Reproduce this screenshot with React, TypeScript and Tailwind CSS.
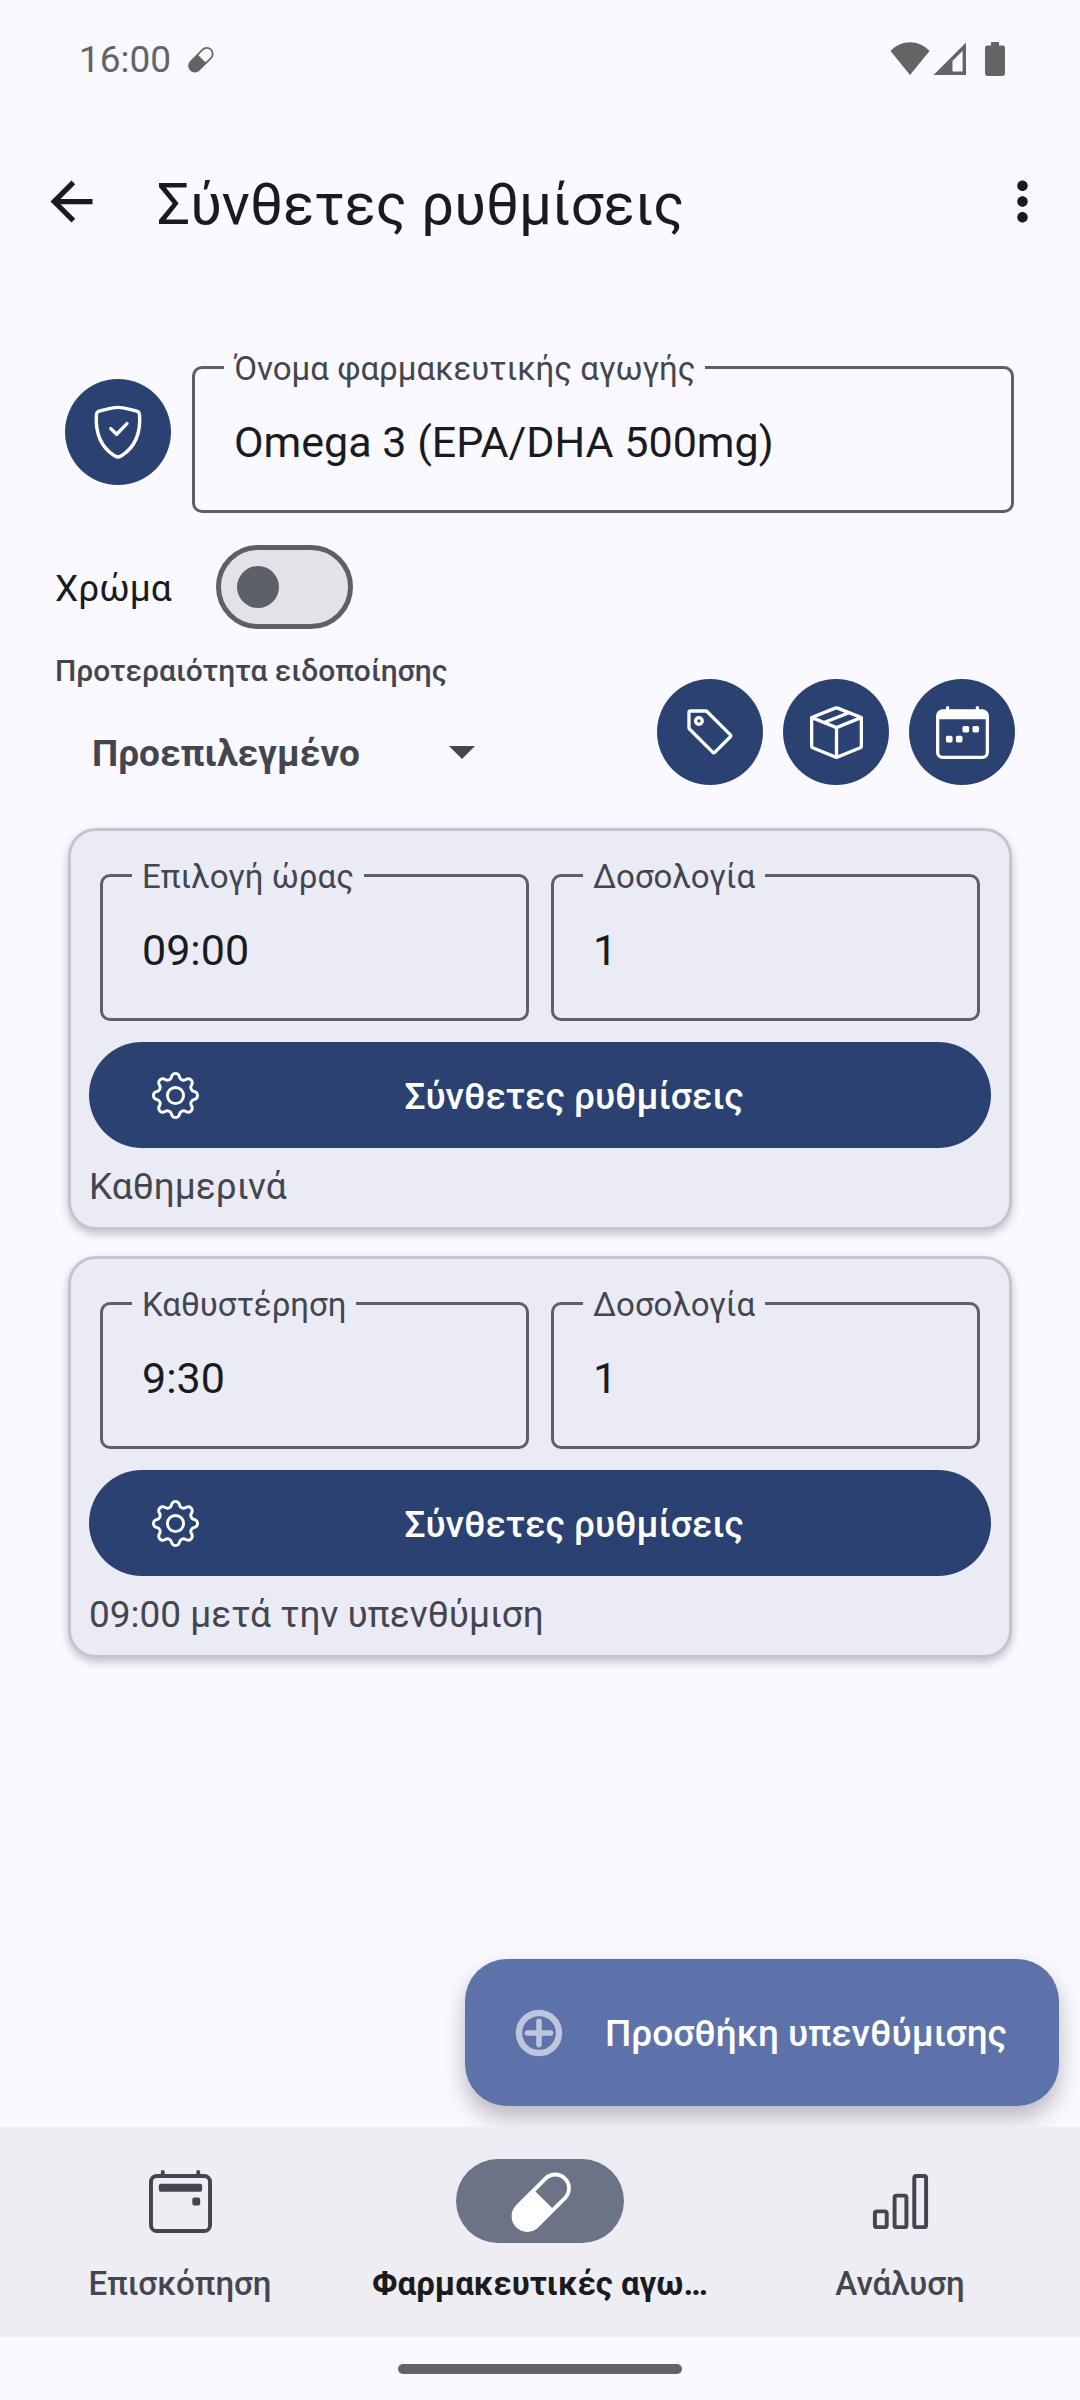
import { useId, useState } from 'react';
import type { ReactNode } from 'react';
import {
  BsBarChart,
  BsBoxSeam,
  BsCalendar2Event,
  BsCalendarWeek,
  BsCapsule,
  BsGear,
  BsTag,
} from 'react-icons/bs';
import { MdArrowBack, MdMoreVert } from 'react-icons/md';

function ShieldIcon() {
  return (
    <svg viewBox="0 0 63 63" className="size-[63px]" fill="none" stroke="currentColor" strokeWidth="3.4" strokeLinecap="round" strokeLinejoin="round" aria-hidden="true">
      <path d="M31 6.4C25 6.4 17.5 8.8 12.1 10.2Q9.6 11 9.4 14C8.1 34 15 46.5 26.9 54.4Q31 57.4 35.1 54.4C47 46.5 53.9 34 52.6 14Q52.4 11 49.9 10.2C44.5 8.8 37 6.4 31 6.4Z" />
      <path d="M23.8 27.6L29.6 33.2L40 22.6" />
    </svg>
  );
}

function PlusCircleIcon() {
  return (
    <svg viewBox="0 0 48 48" className="size-12 opacity-60" fill="none" stroke="currentColor" aria-hidden="true">
      <circle cx="24" cy="24" r="20" strokeWidth="6.4" />
      <path d="M24 12.4V35.6M12.4 24H35.6" strokeWidth="5.6" strokeLinecap="round" />
    </svg>
  );
}

function StatusBar() {
  return (
    <div className="flex h-32 items-start justify-between pl-[79px] pr-[75px] pt-9 text-[#646466]">
      <div className="flex items-center gap-4">
        <span className="pt-px text-[37px] leading-[46px]">16:00</span>
        <BsCapsule className="size-[27px]" aria-hidden="true" />
      </div>
      <div className="flex items-center pt-[6px]">
        <svg viewBox="0 0 40 34" className="h-[34px] w-10" fill="currentColor" aria-hidden="true">
          <path d="M0.5 9C11 -2.6 29 -2.6 39.5 9L20 33Z" />
        </svg>
        <svg viewBox="0 0 34 34" className="ml-[3px] h-[34px] w-[34px]" fill="currentColor" aria-hidden="true">
          <path fillRule="evenodd" d="M33 0.5V33H0.5ZM29.6 9L19.5 19V29.5H29.6Z" />
        </svg>
        <svg viewBox="0 0 20 34" className="ml-[18px] h-[34px] w-5" fill="currentColor" aria-hidden="true">
          <path d="M6 0H14V3.4H17.6Q20 3.4 20 5.8V31.6Q20 34 17.6 34H2.4Q0 34 0 31.6V5.8Q0 3.4 2.4 3.4H6Z" />
        </svg>
      </div>
    </div>
  );
}

function TextField({ label, value, labelBg }: { label: string; value: string; labelBg: string }) {
  const id = useId();
  return (
    <div className="min-w-0 flex-1 pt-[15px]">
      <div className="relative">
        <label htmlFor={id} className={`absolute -top-4 left-8 px-[10px] text-[33px] leading-[38px] text-[#44464f] ${labelBg}`}>
          {label}
        </label>
        <input
          id={id}
          type="text"
          defaultValue={value}
          className="h-[147px] w-full rounded-[10px] border-[3px] border-[#5e6067] bg-transparent px-[39px] pt-1 text-[43px] text-[#1a1b20] outline-none"
        />
      </div>
    </div>
  );
}

function RoundButton({ label, children }: { label: string; children: ReactNode }) {
  return (
    <button type="button" aria-label={label} className="flex size-[106px] shrink-0 items-center justify-center rounded-full bg-[#2a4171] text-white">
      {children}
    </button>
  );
}

function ReminderCard({ label, value, summary }: { label: string; value: string; summary: string }) {
  return (
    <section className="rounded-[28px] border-[3px] border-[#c8c3cf] bg-[#ebebf5] px-[18px] pb-[18px] pt-7 shadow-[0_4px_8px_rgba(60,40,60,0.28)]">
      <div className="flex gap-[22px] px-[11px]">
        <TextField label={label} value={value} labelBg="bg-[#ebebf5]" />
        <TextField label="Δοσολογία" value="1" labelBg="bg-[#ebebf5]" />
      </div>
      <button type="button" className="mt-[21px] flex h-[106px] w-full items-center gap-[21px] rounded-full bg-[#2a4171] px-[63px] text-[37px] font-medium text-white">
        <BsGear className="size-[47px] shrink-0" aria-hidden="true" />
        <span className="flex-1 pt-[3px] text-center">Σύνθετες ρυθμίσεις</span>
      </button>
      <p className="mt-[17px] text-[37px] leading-[44px] text-[#44464f]">{summary}</p>
    </section>
  );
}

function NavItem({ label, active, children }: { label: string; active?: boolean; children: ReactNode }) {
  return (
    <a
      href="#"
      aria-current={active ? 'page' : undefined}
      className={`flex min-w-0 flex-1 flex-col items-center gap-[21px] ${active ? 'font-bold text-[#1a1b20]' : 'font-medium text-[#44464f]'}`}
    >
      <span className={`flex h-[84px] w-[168px] items-center justify-center rounded-full ${active ? 'bg-[#6d7387] text-white' : ''}`}>
        {children}
      </span>
      <span className="whitespace-nowrap text-[33px] leading-10">{label}</span>
    </a>
  );
}

export default function App() {
  const [colorOn, setColorOn] = useState(false);
  return (
    <div className="flex min-h-screen flex-col bg-[#f9f9ff] font-['Roboto',sans-serif] text-[#1a1b20]">
      <StatusBar />
      <header className="flex h-[147px] items-center pl-10 pr-[26px]">
        <button type="button" aria-label="Πίσω">
          <MdArrowBack className="size-[63px]" />
        </button>
        <h1 className="flex-1 pl-[54px] pt-[5px] text-[58px] leading-[68px]">Σύνθετες ρυθμίσεις</h1>
        <button type="button" aria-label="Περισσότερα">
          <MdMoreVert className="size-[63px]" />
        </button>
      </header>

      <main className="flex flex-1 flex-col pt-[76px]">
        <div className="flex items-center gap-[21px] pl-[65px] pr-[66px]">
          <RoundButton label="Εικονίδιο">
            <ShieldIcon />
          </RoundButton>
          <TextField label="Όνομα φαρμακευτικής αγωγής" value="Omega 3 (EPA/DHA 500mg)" labelBg="bg-[#f9f9ff]" />
        </div>

        <label className="mt-8 flex items-center gap-11 self-start pl-[55px]">
          <span className="pt-[3px] text-[37px] leading-[44px]">Χρώμα</span>
          <input type="checkbox" role="switch" className="peer sr-only" checked={colorOn} onChange={(e) => setColorOn(e.target.checked)} />
          <span className="flex h-[84px] w-[137px] items-center rounded-full border-[5px] border-[#5e6067] bg-[#e2e2e8] px-4 peer-checked:justify-end">
            <span className="size-[42px] rounded-full bg-[#5e6067]" />
          </span>
        </label>

        <div className="mt-6 flex items-end justify-between pl-[55px] pr-[65px]">
          <div className="flex flex-col gap-[33px]">
            <label htmlFor="priority" className="text-[30px] font-medium leading-9 text-[#44464f]">
              Προτεραιότητα ειδοποίησης
            </label>
            <div className="relative w-[450px]">
              <select id="priority" className="h-[63px] w-full appearance-none bg-transparent pl-[37px] pr-20 text-[37px] font-bold text-[#44464f] outline-none">
                <option>Προεπιλεγμένο</option>
              </select>
              <svg viewBox="0 0 26 13" className="pointer-events-none absolute right-[30px] top-6 h-[13px] w-[26px]" fill="#44464f" aria-hidden="true">
                <path d="M0 0H26L13 13Z" />
              </svg>
            </div>
          </div>
          <div className="flex gap-5">
            <RoundButton label="Ετικέτες">
              <BsTag className="size-[53px]" />
            </RoundButton>
            <RoundButton label="Απόθεμα">
              <BsBoxSeam className="size-[53px]" />
            </RoundButton>
            <RoundButton label="Ημερολόγιο">
              <BsCalendarWeek className="size-[53px]" />
            </RoundButton>
          </div>
        </div>

        <div className="mt-[43px] flex flex-col gap-[26px] px-[68px]">
          <ReminderCard label="Επιλογή ώρας" value="09:00" summary="Καθημερινά" />
          <ReminderCard label="Καθυστέρηση" value="9:30" summary="09:00 μετά την υπενθύμιση" />
        </div>

        <button
          type="button"
          className="mb-[21px] mr-[21px] mt-auto flex h-[147px] items-center gap-[42px] self-end rounded-[42px] bg-[#5e72aa] pl-[50px] pr-[52px] text-[37px] font-medium text-white shadow-[0_12px_22px_rgba(60,40,60,0.32)]"
        >
          <PlusCircleIcon />
          <span className="pt-[3px]">Προσθήκη υπενθύμισης</span>
        </button>
      </main>

      <nav className="relative flex bg-[#eeedf3] pb-[33px] pt-8">
        <NavItem label="Επισκόπηση">
          <BsCalendar2Event className="size-[63px]" aria-hidden="true" />
        </NavItem>
        <NavItem label="Φαρμακευτικές αγω…" active>
          <BsCapsule className="size-[63px]" aria-hidden="true" />
        </NavItem>
        <NavItem label="Ανάλυση">
          <BsBarChart className="size-[63px]" aria-hidden="true" />
        </NavItem>
      </nav>
      <div className="flex justify-center pb-[26px] pt-[27px]">
        <div className="h-[10px] w-[284px] rounded-full bg-[#646466]" />
      </div>
    </div>
  );
}
